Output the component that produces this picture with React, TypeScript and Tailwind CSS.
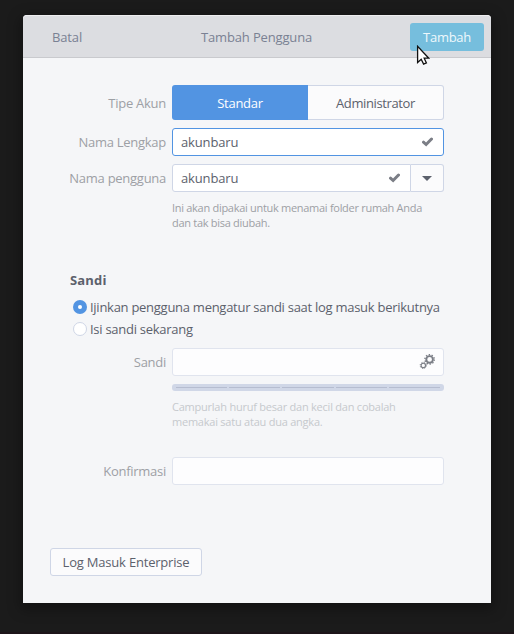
import type { ReactNode } from "react";

function Check() {
  return (
    <svg width="11" height="10" viewBox="0 0 11 10" fill="none" className="shrink-0">
      <path d="M1.5 5.2 4.1 7.5 9.5 2" stroke="#7b7e86" strokeWidth="3" strokeLinecap="round" />
    </svg>
  );
}

function Gears() {
  return (
    <svg width="16" height="16" viewBox="0 0 16 16" fill="none" stroke="#7b7e86" className="shrink-0">
      <circle cx="10.6" cy="5.4" r="3.3" strokeWidth="1.9" />
      <circle cx="10.6" cy="5.4" r="4.7" strokeWidth="1.4" strokeDasharray="1.4 1.553" />
      <circle cx="4.3" cy="11.4" r="2.2" strokeWidth="1.1" />
      <circle cx="4.3" cy="11.4" r="3.1" strokeWidth="1" strokeDasharray="1.2 1.235" />
    </svg>
  );
}

function Cursor() {
  return (
    <svg width="14" height="21" viewBox="0 0 14 21" className="absolute left-[6px] top-[22px]">
      <path
        d="M1.6 1.3v16.2l3.6-3.3 2.4 4.9 2.8-1.2-2.2-4.7h4.6z"
        fill="#fff"
        stroke="#111"
        strokeWidth="1.3"
      />
    </svg>
  );
}

function Row({ label, className, children }: { label: string; className: string; children: ReactNode }) {
  return (
    <div className={`flex items-center ${className}`}>
      <label className="w-[143px] shrink-0 pr-[6px] text-right text-[#9da0a5]">{label}</label>
      <div className="flex h-full w-[272px] shrink-0">{children}</div>
    </div>
  );
}

export default function App() {
  return (
    <div className="h-[634px] w-[514px] overflow-hidden border-b-2 border-[#1d1519] bg-[#1b1b1b] pl-[23px] pt-[15px] font-['Open_Sans','Noto_Sans',sans-serif] text-[13px] leading-[18px] tracking-[-0.27px] text-[#5c616c]">
      <main className="flex h-[588px] w-[468px] flex-col rounded-t-[4px] bg-[#f5f6f8] shadow-[0_4px_14px_2px_rgba(0,0,0,0.35)]">
        <header className="flex h-[43px] shrink-0 items-center rounded-t-[4px] border-b border-t border-b-[#c9cace] border-t-[#eeeef0] bg-[#dcdde1] pl-[29px] pr-[7px] tracking-[-0.15px] text-[#7a8193]">
          <span className="w-[149px]">Batal</span>
          <span>Tambah Pengguna</span>
          <button className="relative ml-auto h-7 w-[74px] rounded-[3px] bg-[#76bedd] tracking-[-0.3px] text-[#eef8fc]">
            Tambah
            <Cursor />
          </button>
        </header>

        <section className="flex flex-col pl-[6px] pt-[27px]">
          <Row label="Tipe Akun" className="h-[35px]">
            <button className="w-[136px] rounded-l-[3px] bg-[#5294e2] text-white">Standar</button>
            <button className="w-[136px] rounded-r-[3px] border border-l-0 border-[#cfd6e6] bg-[#fbfbfc] tracking-[-0.38px]">Administrator</button>
          </Row>
          <Row label="Nama Lengkap" className="mt-2 h-7">
            <div className="flex w-full items-center justify-between rounded-[3px] border border-[#5294e2] bg-white pl-2 pr-[10px] tracking-[-0.15px]">
              <span>akunbaru</span>
              <Check />
            </div>
          </Row>
          <Row label="Nama pengguna" className="mt-2 h-7">
            <div className="flex w-[239px] items-center justify-between rounded-l-[3px] border border-[#cfd6e6] bg-white pl-2 pr-[10px] tracking-[-0.15px]">
              <span>akunbaru</span>
              <Check />
            </div>
            <button className="flex w-[33px] items-center justify-center rounded-r-[3px] border border-l-0 border-[#cfd6e6] bg-[#fbfbfc]">
              <svg width="10" height="5" viewBox="0 0 10 5"><path d="M0 0h10L5 5z" fill="#5c616c" /></svg>
            </button>
          </Row>
          <p className="ml-[143px] mt-2 text-[11px] leading-[15px] tracking-[-0.29px] text-[#9da0a5]">
            Ini akan dipakai untuk menamai folder rumah Anda<br />dan tak bisa diubah.
          </p>

          <h2 className="ml-[41px] mt-[41px] font-bold tracking-[0.15px]">Sandi</h2>
          <div className="ml-[44px] mt-[9px] flex h-[18px] items-center gap-[3px]">
            <span className="flex size-[14px] items-center justify-center rounded-full bg-[#5294e2]"><i className="size-1 rounded-full bg-white" /></span>
            <span className="whitespace-nowrap">Ijinkan pengguna mengatur sandi saat log masuk berikutnya</span>
          </div>
          <div className="ml-[44px] mt-1 flex h-[18px] items-center gap-[3px]">
            <span className="size-[14px] rounded-full border border-[#cfd6e6] bg-white" />
            <span>Isi sandi sekarang</span>
          </div>

          <Row label="Sandi" className="mt-[10px] h-7">
            <div className="flex w-full items-center justify-end rounded-[3px] border border-[#e0e4ee] bg-[#fdfdfe] pr-2"><Gears /></div>
          </Row>
          <div className="ml-[143px] mt-2 flex h-[7px] w-[272px] items-center gap-[2px] rounded-[3px] bg-[#d0d7e7] px-[4px]">
            {[0, 1, 2, 3, 4].map((i) => <i key={i} className="h-px flex-1 bg-[#b6bdd0]" />)}
          </div>
          <p className="ml-[143px] mt-2 text-[11px] leading-[15px] tracking-[-0.23px] text-[#c6c9cd]">
            Campurlah huruf besar dan kecil dan cobalah<br />memakai satu atau dua angka.
          </p>
          <Row label="Konfirmasi" className="mt-[28px] h-7">
            <div className="w-full rounded-[3px] border border-[#e0e4ee] bg-[#fdfdfe]" />
          </Row>
        </section>
        <button className="ml-[27px] mt-[63px] h-7 w-[152px] shrink-0 rounded-[3px] border border-[#cfd6e6] bg-[#fbfbfc] tracking-[-0.2px]">Log Masuk Enterprise</button>
      </main>
    </div>
  );
}
